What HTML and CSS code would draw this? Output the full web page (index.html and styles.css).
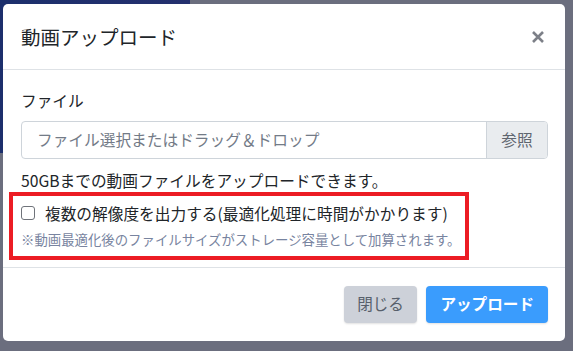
FILE: index.html
```html
<!DOCTYPE html>
<html lang="ja">
<head>
<meta charset="utf-8">
<title>動画アップロード</title>
<link rel="stylesheet" href="styles.css">
</head>
<body>
<div class="modal">
  <div class="modal-header">
    <h5 class="modal-title">動画アップロード</h5>
    <button class="close" type="button" aria-label="閉じる">
      <svg width="12" height="12" viewBox="0 0 12 12"><path d="M1 1L11 11M11 1L1 11" stroke="#7d8088" stroke-width="2.6" stroke-linecap="butt"/></svg>
    </button>
  </div>
  <div class="modal-body">
    <label class="field-label">ファイル</label>
    <div class="file-input">
      <span class="file-placeholder">ファイル選択またはドラッグ＆ドロップ</span>
      <span class="file-browse">参照</span>
    </div>
    <p class="help">50GBまでの動画ファイルをアップロードできます。</p>
    <div class="option">
      <label class="check"><span class="checkbox"></span><span>複数の解像度を出力する(最適化処理に時間がかかります)</span></label>
      <small class="note">※動画最適化後のファイルサイズがストレージ容量として加算されます。</small>
      <div class="highlight"></div>
    </div>
  </div>
  <div class="modal-footer">
    <button class="btn btn-secondary" type="button">閉じる</button>
    <button class="btn btn-primary" type="button">アップロード</button>
  </div>
</div>
</body>
</html>
```
FILE: styles.css
```css
* { box-sizing: border-box; }
html, body { height: 100%; }
body {
  margin: 0;
  padding: 4px 0 0 3px;
  font-family: "Noto Sans CJK JP", "Noto Sans", sans-serif;
  color: #212529;
  background:
    linear-gradient(90deg, #1c2f6c, #24306e) no-repeat 0 0 / 190px 153px,
    #6b6e7e;
  overflow: hidden;
}
.modal {
  width: 562px;
  background: #fff;
  border-radius: 5px;
}
.modal-header {
  display: flex;
  align-items: center;
  justify-content: space-between;
  padding: 18px 18px 18px 18px;
  border-bottom: 1px solid #dee2e6;
  height: 66px;
}
.modal-title {
  margin: 0;
  font-size: 19.5px;
  font-weight: 400;
  line-height: 1.5;
  color: #212529;
}
.close {
  width: 18px;
  height: 18px;
  padding: 0;
  border: 0;
  background: none;
  display: flex;
  align-items: center;
  justify-content: center;
}
.modal-body {
  padding: 18.5px 17px 17.5px 18px;
  font-size: 15.7px;
  line-height: 1.49;
}
.field-label {
  display: block;
  margin-bottom: 9px;
}
.file-input {
  display: flex;
  height: 38px;
  border: 1px solid #ced4da;
  border-radius: 4px;
  overflow: hidden;
}
.file-placeholder {
  flex: 1;
  padding: 0 15px;
  display: flex;
  align-items: center;
  color: #737b87;
}
.file-browse {
  width: 61px;
  display: flex;
  align-items: center;
  justify-content: center;
  background: #e9ecef;
  border-left: 1px solid #ced4da;
  color: #5f6670;
}
.help {
  margin: 10.5px 0 0;
}
.option {
  position: relative;
  margin-top: 9px;
}
.check {
  display: flex;
  align-items: center;
}
.checkbox {
  width: 14px;
  height: 14px;
  border: 1.5px solid #6f737a;
  border-radius: 3px;
  margin-right: 10px;
  flex: none;
}
.note {
  display: block;
  margin-top: 4.5px;
  font-size: 13.4px;
  line-height: 1.45;
  color: #7884a0;
}
.highlight {
  position: absolute;
  left: -12px;
  top: -10px;
  width: 460px;
  height: 68px;
  border: 4px solid #ec1c24;
  pointer-events: none;
}
.modal-footer {
  display: flex;
  justify-content: flex-end;
  gap: 9px;
  padding: 18px 17px 18px 18px;
  border-top: 1px solid #dee2e6;
}
.btn {
  height: 37px;
  padding: 0 13.5px;
  border: 0;
  border-radius: 4px;
  font-family: inherit;
  font-size: 15.6px;
  line-height: 1.5;
  box-shadow: 0 1px 2px rgba(0,0,0,0.12);
}
.btn-secondary {
  background: #cdd1d9;
  color: #575f6b;
}
.btn-primary {
  background: #3a9cfd;
  color: #fff;
  font-weight: 700;
  padding: 0 14px;
}
```
